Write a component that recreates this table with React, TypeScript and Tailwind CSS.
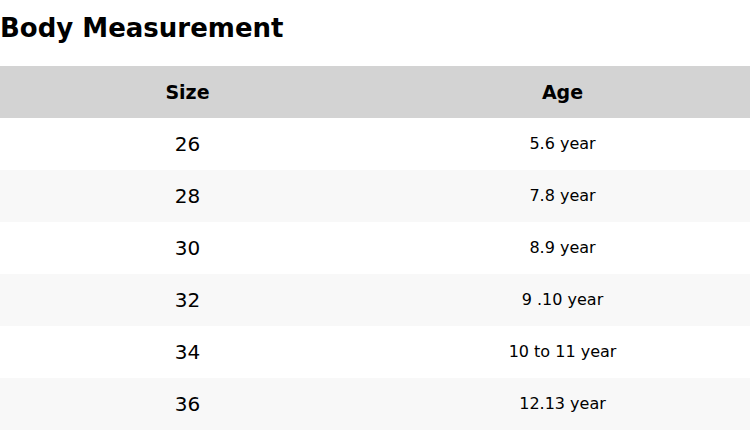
export default function App() {
  const rows = [
    ["26", "5.6 year"],
    ["28", "7.8 year"],
    ["30", "8.9 year"],
    ["32", "9 .10 year"],
    ["34", "10 to 11 year"],
    ["36", "12.13 year"],
  ];
  return (
    <div className="w-[750px] h-[430px] overflow-hidden bg-white text-black" style={{ fontFamily: '"DejaVu Sans", sans-serif' }}>
      <h2 className="h-[56px] pt-[10px] text-[26px] leading-[36px] font-bold">Body Measurement</h2>
      <div className="mt-[10px] grid grid-cols-2 h-[52px] bg-[#d3d3d3] items-center text-center text-[19px] font-bold">
        <div>Size</div>
        <div>Age</div>
      </div>
      {rows.map((r, i) => (
        <div key={i} className={`grid grid-cols-2 h-[52px] items-center text-center ${i % 2 === 1 ? "bg-[#f8f8f8]" : "bg-white"}`}>
          <div className="text-[20px]">{r[0]}</div>
          <div className="text-[16px]">{r[1]}</div>
        </div>
      ))}
    </div>
  );
}
